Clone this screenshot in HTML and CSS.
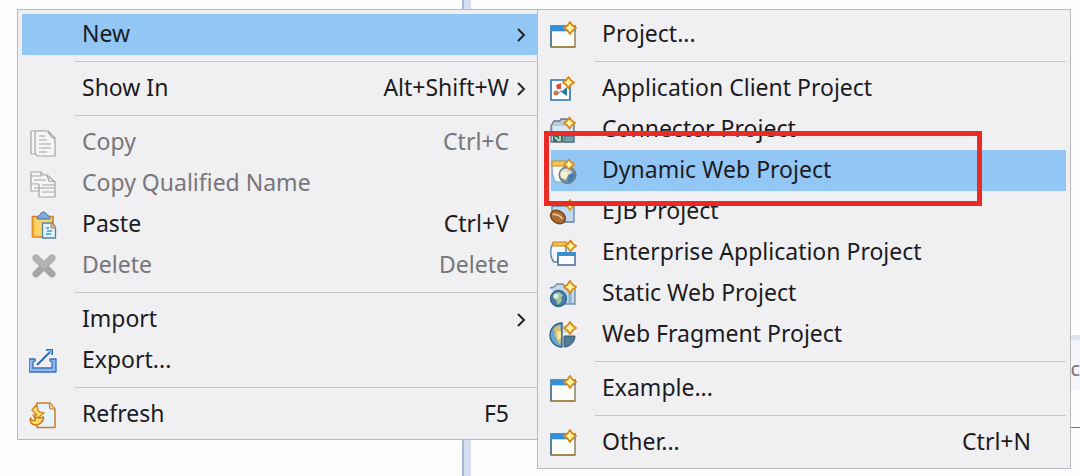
FILE: index.html
```
<!DOCTYPE html>
<html lang="en">
<head>
<meta charset="utf-8">
<title>New project menu</title>
<link rel="stylesheet" href="styles.css">
</head>
<body>
<svg class="defs" aria-hidden="true">
  <defs>
    <symbol id="spark" viewBox="0 0 14 14"><path d="M7 1 9.500 4.500 13 7 9.500 9.500 7 13 4.500 9.500 1 7 4.500 4.500z" fill="#fff3a0" stroke="#d98a1c" stroke-width="1.900" stroke-linejoin="round"/></symbol>
    <symbol id="window" viewBox="0 0 28 28">
      <path d="M2 5h24v21H2z" fill="#fcfcfb" stroke="#8d7a5c" stroke-width="1.4"/>
      <path d="M1.3 4.3h25.4v6H1.3z" fill="#3590d8"/>
      <path d="M2 10v16" stroke="#3d7396" stroke-width="1.4"/>
      <path d="M2 26h24" stroke="#a3873f" stroke-width="1.6"/>
      <use href="#spark" x="14" y="-1" width="14" height="16"/>
    </symbol>
  </defs>
</svg>

<div class="workbench">
  <div class="explorer"></div>
  <div class="sash"></div>
  <div class="editor">
    <div class="editor-body"></div>
    <div class="tab-edge"></div>
    <div class="tabs">c</div>
    <div class="view"></div>
  </div>
</div>

<div class="menus">
  <div class="menu menu-main" role="menu" aria-label="Context menu">
    <button class="item active" role="menuitem" aria-haspopup="true"><span class="icon"></span><span class="label">New</span><svg class="arrow" viewBox="0 0 10 14"><path d="M2 1l6 6-6 6"/></svg></button>
    <hr class="rule">
    <button class="item" role="menuitem" aria-haspopup="true"><span class="icon"></span><span class="label">Show In</span><kbd class="keys">Alt+Shift+W</kbd><svg class="arrow" viewBox="0 0 10 14"><path d="M2 1l6 6-6 6"/></svg></button>
    <hr class="rule">
    <button class="item" role="menuitem" disabled>
      <svg class="icon" viewBox="0 0 28 28" fill="#f5f4f6" stroke="#a5a5a9" stroke-width="1.2" stroke-linejoin="round"><path d="M7 25H2V2h14"/><path d="M6 4q0-2 2-2h11l7 7v18H8l-2-3z"/><path d="M19 3c3 3 2 6 7 7" fill="none"/><path d="M10 7h6M10 11h8M10 15h12M10 19h12M10 23h8" fill="none"/></svg>
      <span class="label">Copy</span><kbd class="keys">Ctrl+C</kbd></button>
    <button class="item" role="menuitem" disabled>
      <svg class="icon" viewBox="0 0 28 28" fill="#f5f4f6" stroke="#a5a5a9" stroke-width="1.2" stroke-linejoin="round"><path d="M2 21V2h10l2 3h4l8 7v15H10v-6z"/><path d="M12 2v4H2M18 5l2 6 6 1M10 21v-7" fill="none"/><path d="M5 10h12M2 14h8M13 15h13M5 18h21M13 22h13" fill="none"/></svg>
      <span class="label">Copy Qualified Name</span></button>
    <button class="item" role="menuitem">
      <svg class="icon" viewBox="0 0 28 28" stroke-linejoin="round"><path d="M3.500 5.500h20.500v20.500H3.500z" fill="#ffd467" stroke="#c9822e" stroke-width="1.700"/><path d="M4.500 7v18h4" fill="none" stroke="#ffad27" stroke-width="1.800"/><path d="M8 8c0-3 2-3 3-4 1-4 6-4 7 0 2 1 3 1 3 4z" fill="#7faade" stroke="#446f9d"/><path d="M13.500 12h9l4 4v11h-13z" fill="#e2f2fc" stroke="#58829c" stroke-width="1.300"/><path d="M22 12v5h5" fill="#efc28c" stroke="#bd7e41"/><path d="M17 17h3M18 20h5M17 23h5" stroke="#4b98d4" stroke-width="1.500"/></svg>
      <span class="label">Paste</span><kbd class="keys">Ctrl+V</kbd></button>
    <button class="item" role="menuitem" disabled>
      <svg class="icon" viewBox="0 0 28 28"><path d="M7 6 23 22M23 6 7 22" fill="none" stroke="#a6a6a8" stroke-width="7" stroke-linecap="round"/><path d="M7 6l8 8 8-8" fill="none" stroke="#b4b4b6" stroke-width="5" stroke-linecap="round"/></svg>
      <span class="label">Delete</span><kbd class="keys">Delete</kbd></button>
    <hr class="rule">
    <button class="item" role="menuitem" aria-haspopup="true"><span class="icon"></span><span class="label">Import</span><svg class="arrow" viewBox="0 0 10 14"><path d="M2 1l6 6-6 6"/></svg></button>
    <button class="item" role="menuitem">
      <svg class="icon" viewBox="0 0 28 28"><path d="M0 12h6v2l-2 1v6h19v-6l-2-1v-2h6v13H0z" fill="#8db9ee" stroke="#386fb5" stroke-width="1.300" stroke-linejoin="round"/><path d="M8 18 21 5M17 3h6v5" fill="none" stroke="#326fae" stroke-width="2"/><path d="M18 3h5v5z" fill="#76a6dc"/></svg>
      <span class="label">Export...</span></button>
    <hr class="rule">
    <button class="item" role="menuitem">
      <svg class="icon" viewBox="0 0 28 28" stroke-linejoin="round"><path d="M8 2h13l5 6v18.500H8z" fill="#e7f2fa" stroke="#c87d25" stroke-width="1.500"/><path d="M20 2l1 6h5" fill="#f3d494" stroke="#ba7933"/><path d="M7 4 3 9l5 5H4l3 4 8-6-5-1z" fill="#ffe17e" stroke="#d48c20" stroke-width="1.500"/><path d="M1.500 17c1 3 3 3 5 2l-1-3 5 1 4-1c0 6-5 8-8 8-4 0-6-3-5-7z" fill="#ffda67" stroke="#c97c17" stroke-width="1.500"/></svg>
      <span class="label">Refresh</span><kbd class="keys">F5</kbd></button>
  </div>

  <div class="menu menu-sub" role="menu" aria-label="New">
    <button class="item" role="menuitem"><svg class="icon"><use href="#window"/></svg><span class="label">Project...</span></button>
    <hr class="rule">
    <button class="item" role="menuitem">
      <svg class="icon" viewBox="0 0 28 28"><path d="M2 5h19v20H2z" fill="#fbfdff" stroke="#2c70aa" stroke-width="1.600"/><path d="M7 10l5-2v6H8z" fill="#dc4b3c"/><circle cx="7" cy="18" r="2.500" fill="#bb8248"/><path d="M9 19l4-4" stroke="#a97a4a"/><path d="M18 12v9l-6-4z" fill="#267f9b"/><use href="#spark" x="13" y="1" width="13" height="13"/></svg>
      <span class="label">Application Client Project</span></button>
    <button class="item" role="menuitem">
      <svg class="icon" viewBox="0 0 28 28"><path d="M2 10 5 5h6l1-2h7v4l6 1v18H2z" fill="#b9ccdf" stroke="#66737f" stroke-width="1.300"/><path d="M4 10h20v8H4z" fill="#d7e6f5"/><path d="M4 19h10v7H4z" fill="#34765f"/><path d="M6 21l4 4M11 20v5" stroke="#d7e9df" stroke-width="1.500"/><path d="M15 20h10v6H15z" fill="#719bb1" stroke="#517082"/><use href="#spark" x="14" y="0" width="13" height="14"/></svg>
      <span class="label">Connector Project</span></button>
    <div class="callout-row">
      <button class="item active" role="menuitem">
        <svg class="icon" viewBox="0 0 28 28"><path d="M3 7h19v18H7q-4-5-4-18z" fill="#f2faff" stroke="#8eabc4"/><path d="M3 4h14v5H3z" fill="#f4c84c" stroke="#c48d23"/><path d="M6 11h7v12H7z" fill="#fff"/><circle cx="18.500" cy="18" r="8.500" fill="#7a8e9c" stroke="#6c7169"/><path d="M12 14c5-5 10-2 11 2l-4 2-2 5c-4-1-7-4-5-9z" fill="#d7e2df"/><path d="M20 18l5-2c1 5-3 9-6 9z" fill="#387abb"/><circle cx="15" cy="18" r="3.500" fill="#faf3c9"/><use href="#spark" x="14" y="1" width="12" height="13"/></svg>
        <span class="label">Dynamic Web Project</span></button>
      <div class="callout"></div>
    </div>
    <button class="item" role="menuitem">
      <svg class="icon" viewBox="0 0 28 28"><path d="M3 8h22v16H14L3 14z" fill="#c1daf3" stroke="#66819e" stroke-width="1.300"/><use href="#spark" x="15" y="0" width="12" height="14"/><g transform="rotate(35 9 19)"><ellipse cx="9" cy="19" rx="8" ry="6" fill="#ad6e35" stroke="#774922" stroke-width="1.500"/><path d="M3 20q5-4 11-2" fill="none" stroke="#ecc38f" stroke-width="1.700"/></g></svg>
      <span class="label">EJB Project</span></button>
    <button class="item" role="menuitem">
      <svg class="icon" viewBox="0 0 28 28"><path d="M4 4h13v12H9v7H5Q1 19 2 9z" fill="#f7fbfe" stroke="#5788ac" stroke-width="1.400"/><path d="M4 3h14v4H3z" fill="#f7c14b" stroke="#bc8428"/><path d="M9 14h17v12H9z" fill="#f8fcff" stroke="#46698f" stroke-width="1.500"/><path d="M8.500 13h18v4h-18z" fill="#398fd5"/><use href="#spark" x="15" y="0" width="13" height="14"/></svg>
      <span class="label">Enterprise Application Project</span></button>
    <button class="item" role="menuitem">
      <svg class="icon" viewBox="0 0 28 28"><path d="M1 8l4-1 3-3h6l2 3h10v17H14" fill="#c4d8ea" stroke="#718da5" stroke-width="1.300"/><path d="M21 10v13" stroke="#8bb1d2" stroke-width="3"/><circle cx="9.500" cy="18.500" r="8" fill="#477fa7" stroke="#2c6187" stroke-width="1.300"/><path d="M5 14l5-2 4 3-2 3 1 3-4 4-2-5-3-2z" fill="#a8c59d"/><circle cx="7" cy="16" r="2.500" fill="#dbefe7"/><use href="#spark" x="14" y="0" width="14" height="14"/></svg>
      <span class="label">Static Web Project</span></button>
    <button class="item" role="menuitem">
      <svg class="icon" viewBox="0 0 28 28"><path d="M13 2a12 12 0 0 0 0 24z" fill="#67a9ce" stroke="#315d7f" stroke-width="1.300"/><path d="M5 7l6-3 1 7-3 3 3 4-1 6-5-9z" fill="#dcc36c"/><path d="M8 10l4 1v6l-3 2z" fill="#f8e7a0"/><path d="M15 15h11c0 6-5 11-11 11z" fill="#517a9b" stroke="#37566f"/><path d="M14 2v10h8" fill="#cee0e7"/><use href="#spark" x="14" y="0" width="14" height="14"/></svg>
      <span class="label">Web Fragment Project</span></button>
    <hr class="rule">
    <button class="item" role="menuitem"><svg class="icon"><use href="#window"/></svg><span class="label">Example...</span></button>
    <hr class="rule">
    <button class="item" role="menuitem"><svg class="icon"><use href="#window"/></svg><span class="label">Other...</span><kbd class="keys">Ctrl+N</kbd></button>
  </div>
</div>
</body>
</html>
```
FILE: styles.css
```
* { box-sizing: border-box; }

body {
  margin: 0;
  position: relative;
  min-height: 100vh;
  background: #fdfcfe;
  color: #1c1b1f;
  font-family: "Noto Sans", "Open Sans", sans-serif;
  font-size: 23px;
  overflow: hidden;
}

.defs { position: absolute; width: 0; height: 0; }

/* Workbench behind the menus */
.workbench {
  position: absolute;
  inset: 0;
  display: flex;
}
.explorer { flex: 462 1 0; }
.sash {
  width: 9px;
  background: #d6dff4;
  border-left: 2px solid #a9b4ce;
}
.editor {
  flex: 609 1 0;
  display: flex;
  flex-direction: column;
}
.editor-body { height: 335px; }
.tab-edge { height: 5px; background: #dfe4f0; }
.tabs {
  height: 50px;
  padding-top: 14px;
  background: #f5f4fa;
  color: #77767c;
  font-size: 20px;
  line-height: 30px;
  text-align: right;
}
.view {
  flex: 1;
  margin-top: 37px;
  border-top: 1px solid #77777c;
}

/* Menus */
.menus {
  position: relative;
  display: flex;
  align-items: flex-start;
  padding: 9px 9px 0 17px;
}
.menu {
  padding: 4px;
  background: #f0eff1;
  border: 1px solid #b9b8be;
}
.menu-main { flex: 532 1 0; }
.menu-sub {
  flex: 534 1 0;
  margin-left: -12px;
  padding-bottom: 5px;
  position: relative;
}

.item {
  display: flex;
  align-items: center;
  width: 100%;
  height: 41px;
  padding: 0 35px 0 7px;
  border: 0;
  background: none;
  color: inherit;
  font: inherit;
  line-height: 32px;
  text-align: left;
  position: relative;
}
.item:disabled { color: #77767b; }
.item.active { background: #91c6f5; }

.icon {
  flex: none;
  width: 28px;
  height: 28px;
  margin-right: 25px;
}
.label { flex: 1; white-space: nowrap; }
.label, .keys { padding-bottom: 3px; }
.keys { font: inherit; }
.arrow {
  position: absolute;
  right: 18px;
  width: 10px;
  height: 14px;
  fill: none;
  stroke: #252429;
  stroke-width: 2;
}

.rule {
  height: 1px;
  margin: 6px 0 6px 53px;
  border: 0;
  background: #c8c7cc;
}

/* Highlighted row inside the callout frame */
.callout-row { position: relative; z-index: 1; }
.callout-row .active {
  background: linear-gradient(to right, transparent 9px, #91c6f5 9px);
}
.callout {
  position: absolute;
  inset: -19px 84px -15px 2px;
  border: 5px solid #ea2a24;
  pointer-events: none;
}
```
